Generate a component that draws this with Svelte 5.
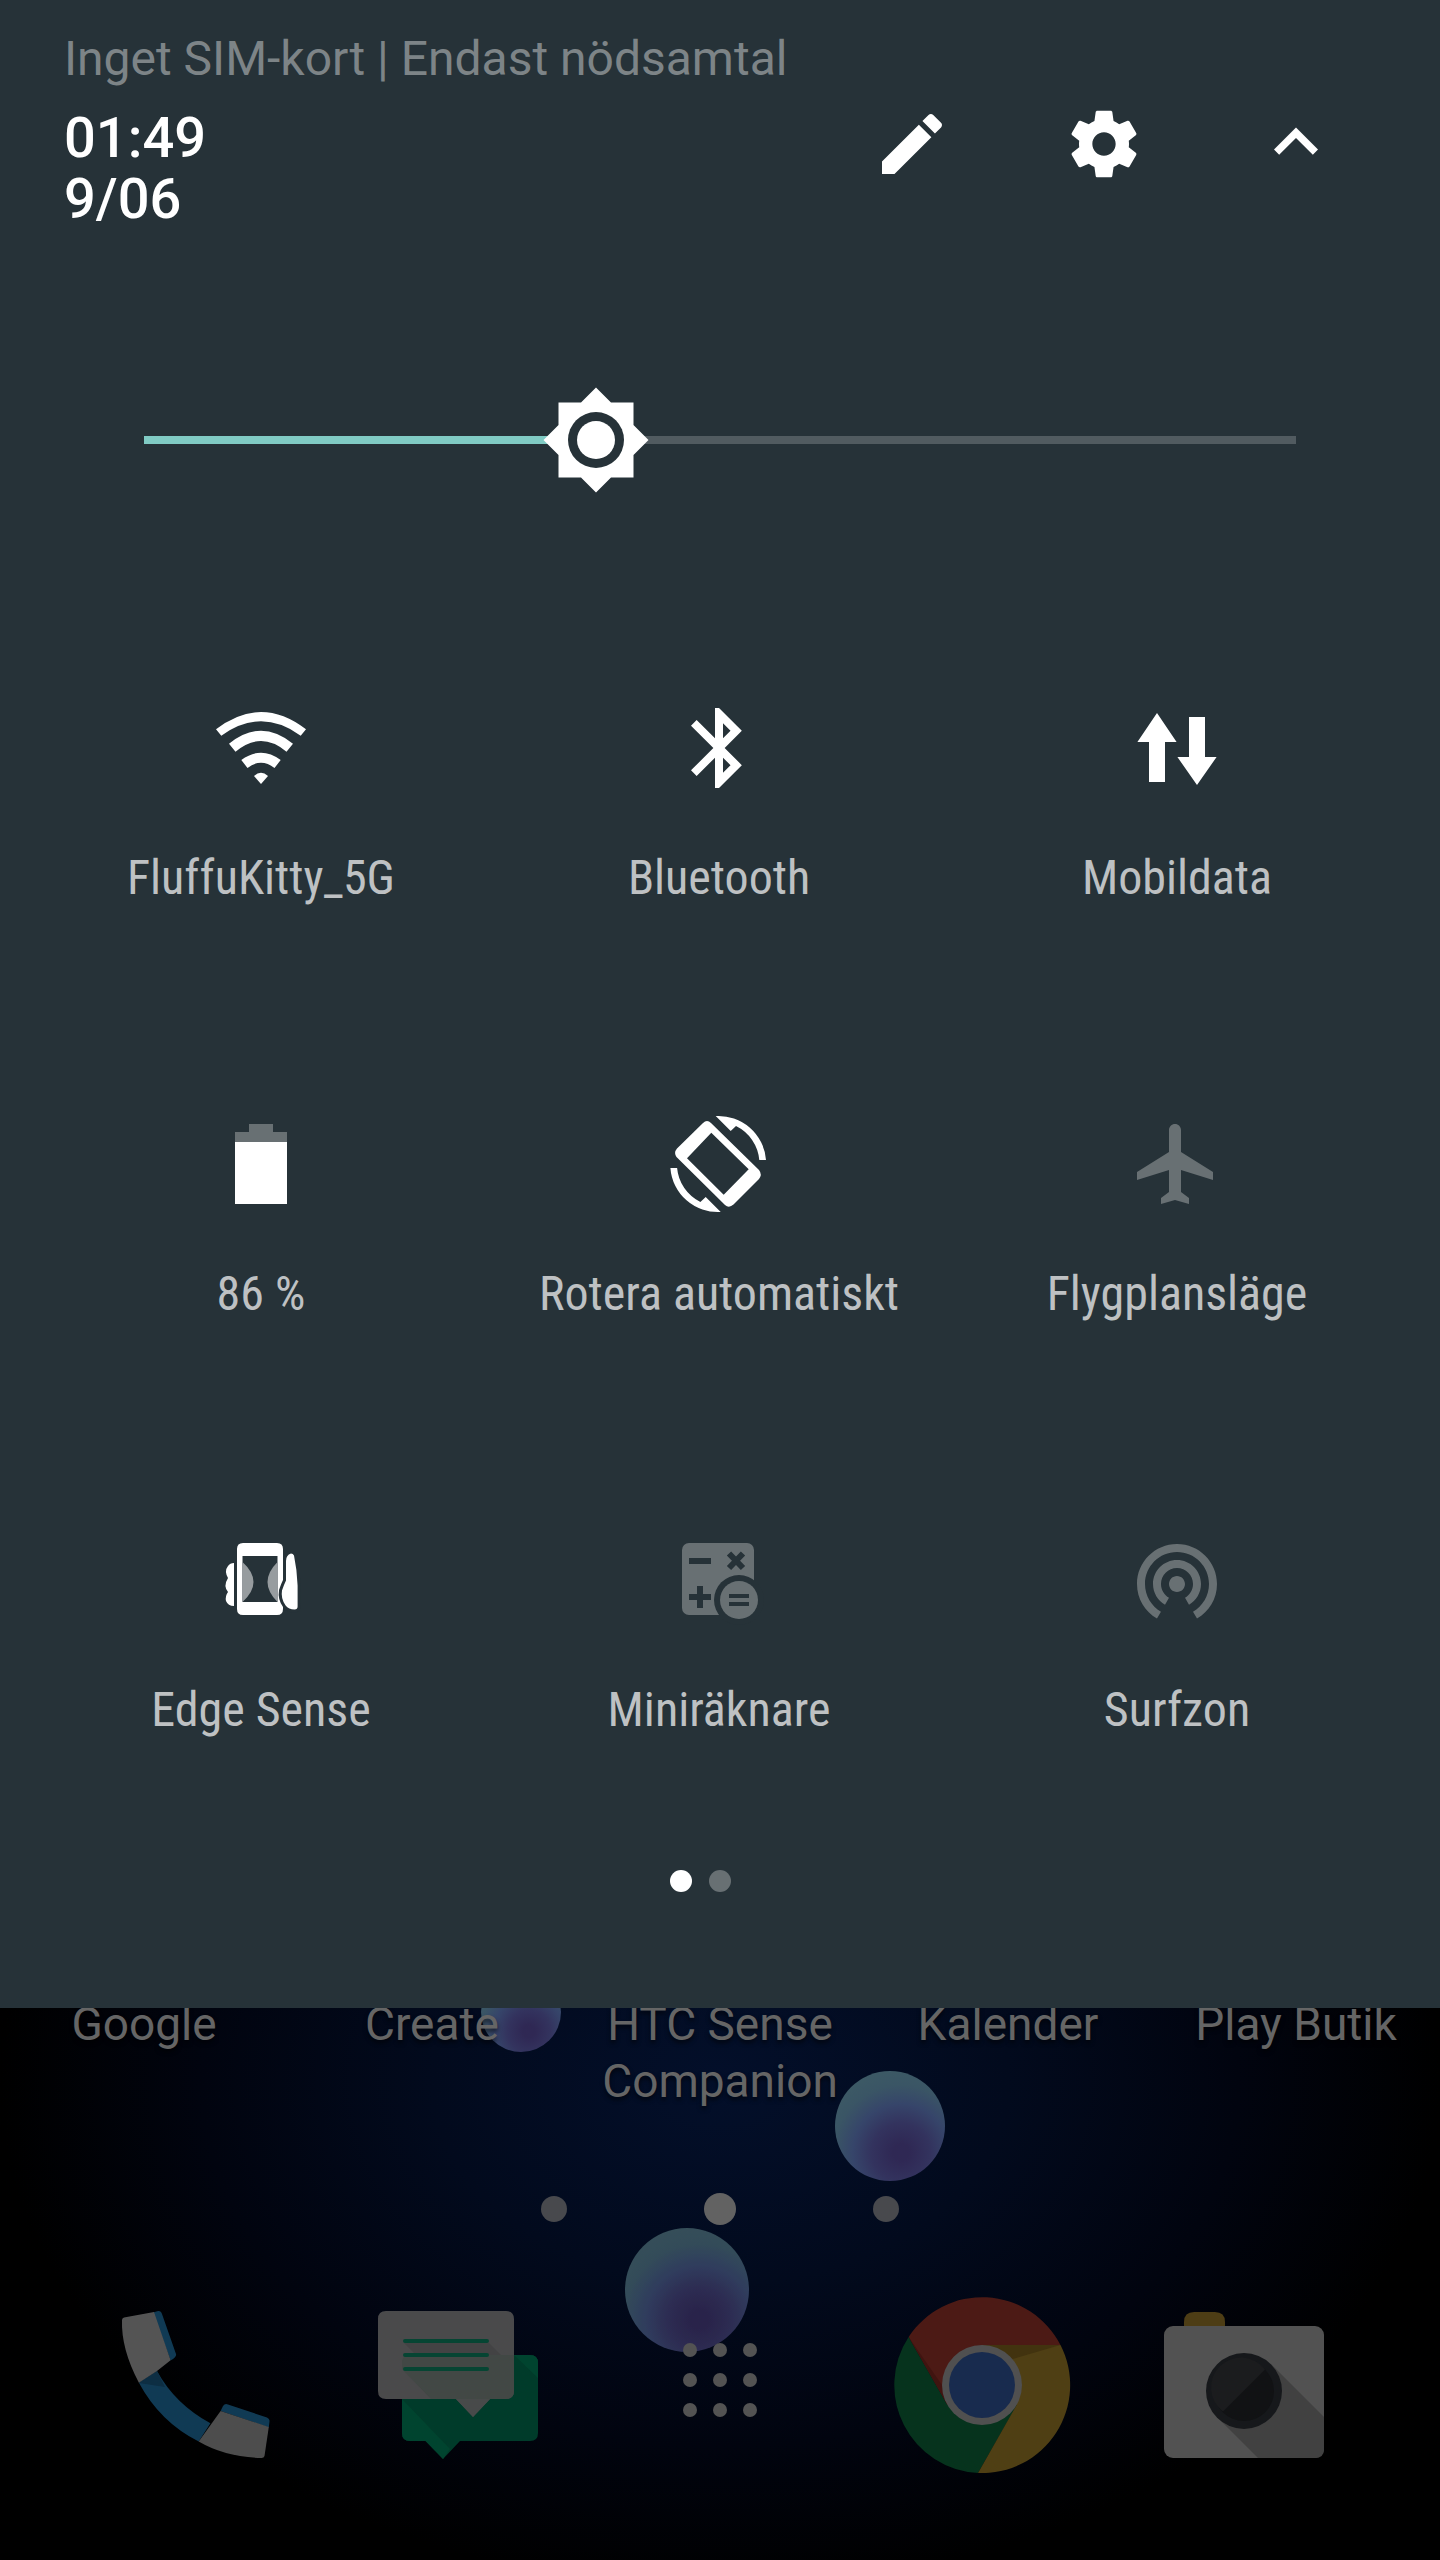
<script>
  // Expanded quick settings shade over the dimmed home screen.
  let brightness = $state(100)
  let level = $derived((brightness / 255) * 100)

  let tiles = [
    { id: 'wifi', label: 'FluffuKitty_5G', on: true },
    { id: 'bluetooth', label: 'Bluetooth', on: true },
    { id: 'data', label: 'Mobildata', on: true },
    { id: 'battery', label: '86 %', on: true },
    { id: 'rotate', label: 'Rotera automatiskt', on: true },
    { id: 'airplane', label: 'Flygplansläge', on: false },
    { id: 'edge', label: 'Edge Sense', on: true },
    { id: 'calc', label: 'Miniräknare', on: false },
    { id: 'hotspot', label: 'Surfzon', on: false },
  ]

  let apps = ['Google', 'Create', 'HTC Sense Companion', 'Kalender', 'Play Butik']

  // Material icons on a 24 grid; the rest are drawn on a 96 grid below
  const material = {
    bluetooth: 'M17.71 7.71L12 2h-1v7.59L6.41 5 5 6.41 10.59 12 5 17.59 6.41 19 11 14.41V22h1l5.71-5.71-4.3-4.29 4.3-4.29zM13 5.83l1.88 1.88L13 9.59V5.83zm1.88 10.46L13 18.17v-3.76l1.88 1.88z',
    airplane: 'M21 16v-2l-8-5V3.5c0-.83-.67-1.5-1.5-1.5S10 2.67 10 3.5V9l-8 5v2l8-2.5V19l-2 1.5V22l3.5-1 3.5 1v-1.5L13 19v-5.5l8 2.5z',
    hotspot: 'M12 11c-1.1 0-2 .9-2 2s.9 2 2 2 2-.9 2-2-.9-2-2-2zm6 2c0-3.31-2.69-6-6-6s-6 2.69-6 6c0 2.22 1.21 4.15 3 5.19l1-1.74c-1.19-.7-2-1.97-2-3.45 0-2.21 1.79-4 4-4s4 1.79 4 4c0 1.48-.81 2.75-2 3.45l1 1.74c1.79-1.04 3-2.97 3-5.19zM12 3C6.48 3 2 7.48 2 13c0 3.7 2.01 6.92 4.99 8.65l1-1.73C5.61 18.53 4 15.96 4 13c0-4.42 3.58-8 8-8s8 3.58 8 8c0 2.96-1.61 5.53-4 6.92l1 1.73c2.99-1.73 5-4.95 5-8.65 0-5.52-4.48-10-10-10z',
  }
</script>

{#snippet tileIcon(id)}
  {#if material[id]}
    <svg class="tile-icon" viewBox="0 0 24 24" aria-hidden="true"><path d={material[id]} /></svg>
  {:else}
    <svg class="tile-icon" viewBox="0 0 96 96" aria-hidden="true">
      {#if id === 'wifi'}
        <path d="M3 29.3Q48-5.3 93 29.3L87.7 35.7Q48 7 8.3 35.7z" />
        <path d="M16 43.7Q48 17.7 80 43.7L73.5 51.7Q48 30.3 22.5 51.7z" />
        <path d="M28.3 60Q48 45.4 67.7 60L61.5 68Q48 57.4 34.5 68z" />
        <path d="M48 84L41 76Q48 69.5 55 76z" />
      {:else if id === 'data'}
        <path d="M28 13L47.6 42H36v40H20V42H8.4zM68 85L48.4 57H60V17h16v40h11.6z" />
      {:else if id === 'battery'}
        <path class="faded" d="M36 8h24v8h14v11H22V16h14z" />
        <path d="M22 26h52v62H22z" />
      {:else if id === 'rotate'}
        <path fill-rule="evenodd" d="M32 7Q36 3 40 7L88 54Q91.5 58.5 88 63L62.5 88.5Q58 92.5 54 89L5.5 41Q2.5 36.5 6 32.5zM40.3 16.7L16 42.3l36.7 36.4 25-25.4z" />
        <path d="M44.7 0l15 15 5.3-5A42 42 0 0 1 88.3 44H95A47.5 47.5 0 0 0 44.7 0z" />
        <path transform="rotate(180 47.2 48)" d="M44.7 0l15 15 5.3-5A42 42 0 0 1 88.3 44H95A47.5 47.5 0 0 0 44.7 0z" />
      {:else if id === 'edge'}
        <path d="M21 31v43q-6 0-8-5-1-5 2-9-5-6 0-14-4-7 0-12 2-3 6-3z" />
        <path fill-rule="evenodd" d="M30 11h34q6 0 6 6v60q0 6-6 6H30q-6 0-6-6V17q0-6 6-6zM29.500 24v46h35V24z" />
        <path class="pressed" d="M29.500 30q22 20 0 40zM64.500 30q-20 20 0 40z" />
        <path class="thumb" d="M73 29q0-6 5-7.500 2 0 3 2 3 14 3.600 30v21q0 3-3 3-6 0-9-4-5-7-3.600-15 2-6 4-10z" />
      {:else if id === 'calc'}
        <rect x="11" y="11" width="72" height="72" rx="7" />
        <path class="line" d="M18 29h22M18 65h22M29 54v22M58 21.500L72 36M72 21.500L58 36" />
        <circle class="cut" cx="68" cy="68" r="25" />
        <circle cx="68" cy="68" r="19" />
        <path class="line thin" d="M58 64h20M58 72h20" />
      {/if}
    </svg>
  {/if}
{/snippet}

<main class="screen">
  <section class="shade">
    <p class="carrier">Inget SIM-kort | Endast nödsamtal</p>
    <header class="header">
      <div class="clock">
        <time>01:49</time>
        <time>9/06</time>
      </div>
      <button class="action" aria-label="Redigera">
        <svg width="80" height="80" viewBox="0 0 24 24" aria-hidden="true">
          <path d="M3 17.250V21h3.750L17.810 9.940l-3.750-3.750L3 17.250zM20.710 7.040c.39-.39.39-1.020 0-1.410l-2.340-2.340c-.39-.39-1.020-.39-1.410 0l-1.830 1.830 3.750 3.750 1.830-1.830z" />
        </svg>
      </button>
      <button class="action" aria-label="Inställningar">
        <svg width="80" height="80" viewBox="0 0 24 24" aria-hidden="true">
          <path d="M19.430 12.980c.04-.32.07-.64.07-.98s-.03-.66-.07-.98l2.110-1.650c.19-.15.24-.42.12-.64l-2-3.460c-.12-.22-.39-.3-.61-.22l-2.490 1c-.52-.4-1.080-.73-1.690-.98l-.38-2.650C14.460 2.180 14.250 2 14 2h-4c-.25 0-.46.18-.49.42l-.38 2.650c-.61.25-1.170.59-1.690.98l-2.490-1c-.23-.09-.49 0-.61.22l-2 3.460c-.13.22-.07.49.12.64l2.110 1.650c-.04.32-.07.65-.07.98s.03.66.07.98l-2.110 1.650c-.19.15-.24.42-.12.64l2 3.460c.12.22.39.3.61.22l2.490-1c.52.4 1.080.73 1.690.98l.38 2.650c.03.24.24.42.49.42h4c.25 0 .46-.18.49-.42l.38-2.650c.61-.25 1.170-.59 1.690-.98l2.490 1c.23.09.49 0 .61-.22l2-3.460c.12-.22.07-.49-.12-.64l-2.110-1.650zM12 15.500c-1.930 0-3.500-1.570-3.500-3.500s1.570-3.500 3.500-3.500 3.500 1.570 3.500 3.500-1.570 3.500-3.500 3.500z" />
        </svg>
      </button>
      <button class="action" aria-label="Dölj">
        <svg width="88" height="88" viewBox="0 0 24 24" aria-hidden="true">
          <path d="M12 7.500l-6 6 1.410 1.410L12 10.330l4.590 4.580L18 13.500z" />
        </svg>
      </button>
    </header>

    <input
      class="brightness"
      type="range"
      min="0"
      max="255"
      bind:value={brightness}
      aria-label="Ljusstyrka"
      style="--level:{level}%"
    />

    <div class="tiles">
      {#each tiles as tile (tile.id)}
        <button class="tile" class:off={!tile.on} aria-pressed={tile.on}>
          {@render tileIcon(tile.id)}
          <span class="tile-label">{tile.label}</span>
        </button>
      {/each}
    </div>

    <nav class="pages" aria-label="Sidor">
      <button class="page current" aria-label="Sida 1"></button>
      <button class="page" aria-label="Sida 2"></button>
    </nav>
  </section>

  <section class="home">
    <span class="bubble small"></span>
    <span class="bubble medium"></span>
    <span class="bubble large"></span>

    <div class="labels">
      {#each apps as app}
        <a href="#{app}">{app}</a>
      {/each}
    </div>

    <div class="panels">
      <span class="panel"></span>
      <span class="panel current"></span>
      <span class="panel"></span>
    </div>

    <nav class="dock">
      <button aria-label="Telefon">
        <svg viewBox="0 0 192 192" aria-hidden="true">
          <path fill="#103a54" d="M57 82Q75 115 110.400 134.300L98.700 152.500Q60 133 38.900 93.700z" />
          <path fill="#0d2e43" d="M57 82l8 16-26-4z" />
          <path fill="#103a54" d="M53 23.500l5-1.500q3-.5 4 3l14 40q1 3-5.400 6.500zM120.600 122l2.400-5q2-3 5-1.500l39 13q3 1.500 2.500 4l-.7 6z" />
          <path fill="#545454" d="M24 28.500l30-5.500 16.600 48.300L57 82 38.900 93.700Q21 60 22 31q0-2 2-2.500z" />
          <path fill="#4d4d4d" d="M120.600 122l48.200 16-4.300 29q-.5 2-3 2Q125 168 98.700 152.500z" />
        </svg>
      </button>
      <button aria-label="Meddelanden">
        <svg viewBox="0 0 192 192" aria-hidden="true">
          <path fill="#003b2a" d="M48 66h120q8 0 8 8v70q0 8-8 8H98l-17 18-17.500-18H48q-8 0-8-8V74q0-8 8-8z" />
          <path fill="#00442f" d="M152 66h16q8 0 8 8v15zM40 110l48 50-7 10-17.500-18H48q-8 0-8-8z" />
          <path fill="#4a4a4b" d="M24 22h120q8 0 8 8v72q0 8-8 8h-16l-17 18-17-18H24q-8 0-8-8V30q0-8 8-8z" />
          <path fill="#424845" d="M40 74q0-8 8-8h104v36q0 8-8 8H69L40 80z" />
          <path fill="#434344" d="M42 54h85l12 12H54z" />
          <path fill="#484a4a" d="M94 110h34l-17 18z" />
          <path fill="#064533" d="M43 50h82q2 0 2 2t-2 2H43q-2 0-2-2t2-2zM43 64h82q2 0 2 2t-2 2H43q-2 0-2-2t2-2zM43 78h82q2 0 2 2t-2 2H43q-2 0-2-2t2-2z" />
        </svg>
      </button>
      <button aria-label="Alla appar">
        <svg viewBox="0 0 192 192" aria-hidden="true">
          {#each [61, 91, 121] as y}
            {#each [66, 96, 126] as x}
              <circle cx={x} cy={y} r="7" fill="#535353" />
            {/each}
          {/each}
        </svg>
      </button>
      <button aria-label="Chrome">
        <svg viewBox="0 0 192 192" aria-hidden="true">
          <path fill="#4c1a15" d="M22.600 48A88 88 0 0 1 174.500 56H96v40L61.400 116z" />
          <path fill="#06331d" d="M22.600 48A88 88 0 0 0 92 184l39-68-35-20-34.600 20z" />
          <path fill="#4f3f14" d="M174.500 56A88 88 0 0 1 92 184l38.600-68L96 96V56z" />
          <path fill="#42330f" d="M96 56h78.500L127 70z" />
          <path fill="#401410" d="M22.600 48L61.400 116 56 96z" />
          <circle cx="96" cy="96" r="40" fill="#505050" />
          <circle cx="96" cy="96" r="33" fill="#182b4e" />
        </svg>
      </button>
      <button aria-label="Kamera">
        <svg viewBox="0 0 192 192" aria-hidden="true">
          <path fill="#4d3d15" d="M36 38v-5q0-10 10-10h21q10 0 10 10v5z" />
          <rect x="16" y="37" width="160" height="132" rx="9" fill="#525252" />
          <path fill="#414141" d="M123 75l53 53v32q0 9-9 9h-57l-41-41z" />
          <circle cx="96" cy="102" r="38" fill="#16181b" />
          <circle cx="96" cy="102" r="30" fill="#111214" />
          <path fill="#1b1c1e" d="M117 80.500A30 30 0 1 0 75 122.500z" />
        </svg>
      </button>
    </nav>
  </section>
</main>

<style>
  :global(body) {
    margin: 0;
    background: #000;
  }

  .screen {
    display: flex;
    flex-direction: column;
    min-height: 100vh;
    font-family: Roboto, 'Noto Sans', sans-serif;
  }

  button {
    margin: 0;
    padding: 0;
    border: 0;
    background: none;
    font: inherit;
    color: inherit;
  }

  .shade {
    position: relative;
    z-index: 1;
    padding: 31px 32px 116px;
    background: #263238;
    color: #fff;
  }

  .carrier {
    margin: 0 32px 19px;
    font-size: 48px;
    line-height: 56px;
    color: #7d8487;
  }

  .header {
    display: flex;
    align-items: flex-start;
    padding: 0 16px 0 32px;
  }

  .clock {
    display: flex;
    flex-direction: column;
    flex: 1;
    padding-top: 2px;
    font-size: 56px;
    font-weight: 500;
    line-height: 61px;
  }

  .action {
    display: flex;
    align-items: center;
    justify-content: center;
    width: 192px;
    height: 76px;
  }

  .action svg {
    fill: #fff;
    flex-shrink: 0;
  }

  .brightness {
    -webkit-appearance: none;
    appearance: none;
    display: block;
    box-sizing: border-box;
    width: calc(100% - 116px);
    height: 108px;
    margin: 156px 58px 206px;
    padding: 0;
    background:
      linear-gradient(90deg, #80cbc4 var(--level), #515b60 var(--level)) center / calc(100% - 108px) 8px no-repeat;
  }

  .brightness::-webkit-slider-thumb {
    -webkit-appearance: none;
    width: 108px;
    height: 108px;
    background: url("data:image/svg+xml,%3Csvg xmlns='http://www.w3.org/2000/svg' viewBox='-54 -54 108 108'%3E%3Cpath fill='%23fff' d='M0-52.500l15 15h22.500v22.500l15 15-15 15v22.500H15l-15 15-15-15h-22.500V15l-15-15 15-15v-22.500H-15z'/%3E%3Ccircle r='28' fill='%23263238'/%3E%3Ccircle r='19' fill='%23fff'/%3E%3C/svg%3E");
  }

  .tiles {
    display: grid;
    grid-template-columns: repeat(3, 1fr);
    row-gap: 210px;
    padding-right: 2px;
  }

  .tile {
    display: flex;
    flex-direction: column;
    align-items: center;
    gap: 54px;
  }

  .tile-icon {
    width: 96px;
    height: 96px;
    fill: #fff;
    overflow: visible;
  }

  .off .tile-icon {
    fill: #687073;
  }

  .faded {
    fill: #687073;
  }

  .pressed {
    fill: #979c9f;
  }

  .thumb {
    stroke: #263238;
    stroke-width: 6;
    paint-order: stroke;
  }

  .cut {
    fill: #263238;
  }

  .line {
    fill: none;
    stroke: #263238;
    stroke-width: 6;
  }

  .line.thin {
    stroke-width: 4;
  }

  .tile-label {
    font-family: 'Roboto Condensed', 'Liberation Sans Narrow', Roboto, sans-serif;
    font-size: 48px;
    line-height: 56px;
    white-space: nowrap;
    color: #bec1c3;
  }

  .pages {
    display: flex;
    justify-content: center;
    gap: 17px;
    margin-top: 132px;
    padding-right: 39px;
  }

  .page {
    width: 22px;
    height: 22px;
    border-radius: 50%;
    background: #687073;
  }

  .page.current {
    background: #fff;
  }

  .home {
    position: relative;
    flex: 1;
    margin-top: -12px;
    padding-bottom: 76px;
    background: radial-gradient(ellipse 50% 90% at 50% 15%, #030f2a, #020a1d 40%, #01040f 72%, #000);
  }

  .bubble {
    position: absolute;
    border-radius: 50%;
    background: radial-gradient(circle at 60% 74%, #2f2854 8%, #33335e 28%, #36456a 46%, #3a5565 64%, #3e5c65 90%);
  }

  .bubble.small {
    top: -24px;
    left: calc(50% - 239px);
    width: 80px;
    height: 80px;
  }

  .bubble.medium {
    top: 75px;
    left: calc(50% + 115px);
    width: 110px;
    height: 110px;
  }

  .bubble.large {
    top: 232px;
    left: calc(50% - 95px);
    width: 124px;
    height: 124px;
    filter: brightness(0.88);
  }

  .labels,
  .panels,
  .dock {
    position: relative;
    display: flex;
  }

  .labels a {
    flex: 1 1 0;
    min-width: 0;
    padding: 0 8px;
    font-size: 46px;
    line-height: 57px;
    text-align: center;
    text-decoration: none;
    text-shadow: 0 3px 4px rgba(0, 0, 0, 0.6);
    color: #656565;
  }

  .panels {
    align-items: center;
    justify-content: center;
    gap: 137px;
    margin-top: 83px;
  }

  .panel {
    width: 26px;
    height: 26px;
    border-radius: 50%;
    background: #48494d;
  }

  .panel.current {
    width: 32px;
    height: 32px;
    background: #626262;
  }

  .dock {
    justify-content: space-around;
    margin-top: 64px;
    padding: 0 65px;
  }

  .dock svg {
    display: block;
    width: 192px;
    height: 192px;
  }
</style>
